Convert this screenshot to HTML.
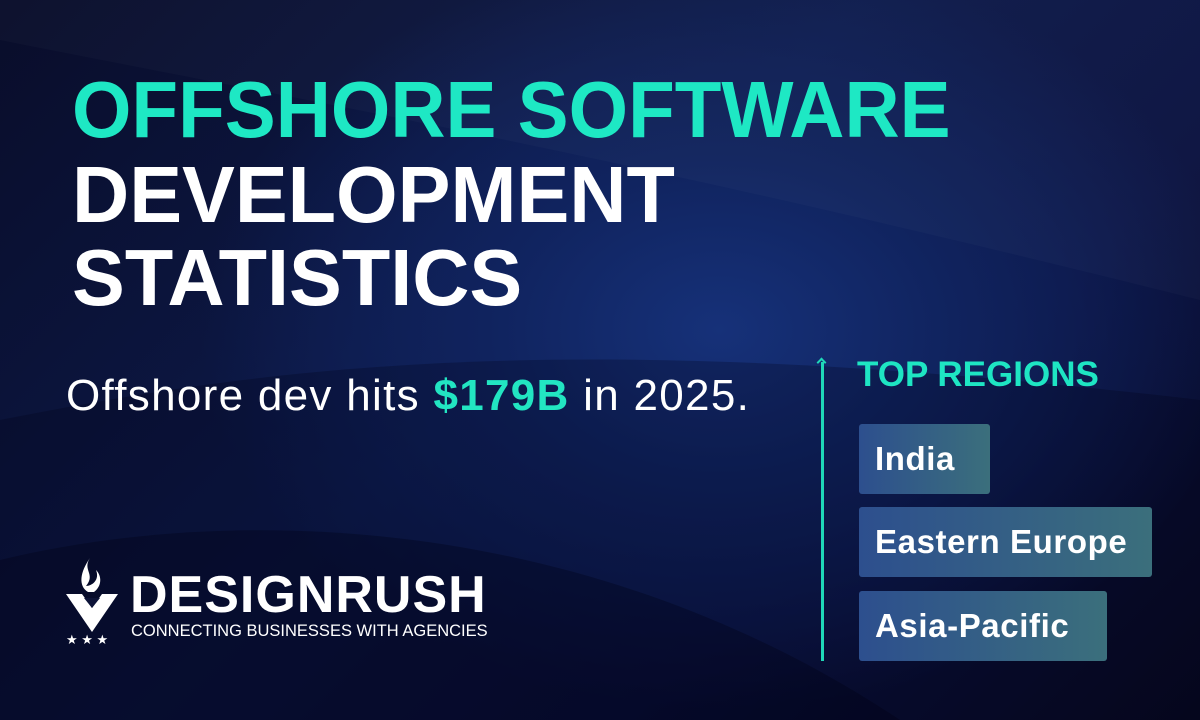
<!DOCTYPE html>
<html><head><meta charset="utf-8"><style>
html,body{margin:0;padding:0}
body{width:1200px;height:720px;overflow:hidden;position:relative;font-family:"Liberation Sans",sans-serif;
background:#0b0f2e;}
.bg{position:absolute;inset:0;background:
radial-gradient(ellipse 520px 380px at 720px 330px,#163179 0%,#10235e 45%,rgba(11,20,60,0) 100%),
linear-gradient(135deg,#090d2a 0%,#0d1a4a 45%,#0b1240 70%,#070920 100%);}
svg.w{position:absolute;inset:0}
.t{position:absolute;left:72px;font-weight:bold;font-size:80px;line-height:1;color:#fff;white-space:nowrap;transform-origin:0 0}
.sub{position:absolute;left:66px;top:371px;font-size:44px;letter-spacing:1.3px;color:#fff;white-space:nowrap}
.sub b{color:#22e5c2}
.line{position:absolute;left:821px;top:362px;width:3px;height:299px;background:#1fd8b8}
.arr{position:absolute;left:818px;top:359px;width:5px;height:5px;border-left:2px solid #1fd8b8;border-top:2px solid #1fd8b8;transform:rotate(45deg)}
.tr{position:absolute;left:857px;top:355px;font-size:35px;font-weight:bold;color:#1ee5c3;white-space:nowrap}
.box{position:absolute;left:859px;height:70px;border-radius:3px;background:linear-gradient(90deg,#2d4f8e,#3b6f7c);color:#fff;font-weight:bold;font-size:33px;letter-spacing:0.6px;line-height:70px;padding-left:16px;box-sizing:border-box;white-space:nowrap}
.logo{position:absolute;left:130px;top:565px;font-size:52px;font-weight:bold;color:#fff;letter-spacing:1px}
.tag{position:absolute;left:131px;top:622px;font-size:16.5px;color:#fff;white-space:nowrap}
</style></head><body>
<div class="bg"></div>
<svg class="w" width="1200" height="720">
<path d="M0 40 C300 100 600 150 1200 300 L1200 0 L0 0Z" fill="rgba(255,255,255,0.025)"/>
<path d="M0 420 C300 360 600 330 1200 400 L1200 720 L0 720Z" fill="rgba(0,0,20,0.25)"/>
<path d="M0 560 C250 500 600 520 900 720 L0 720Z" fill="rgba(0,0,15,0.3)"/>
</svg>
<div class="t" style="top:70px;color:#1ee8c4;transform:scaleX(0.955)">OFFSHORE SOFTWARE</div>
<div class="t" style="top:155px;transform:scaleX(0.99)">DEVELOPMENT</div>
<div class="t" style="top:238px;transform:scaleX(0.99)">STATISTICS</div>
<div class="sub">Offshore dev hits <b>$179B</b> in 2025.</div>
<div class="line"></div><div class="arr"></div>
<div class="tr">TOP REGIONS</div>
<div class="box" style="top:424px;width:131px">India</div>
<div class="box" style="top:507px;width:293px">Eastern Europe</div>
<div class="box" style="top:591px;width:248px">Asia-Pacific</div>
<svg style="position:absolute;left:62px;top:556px" width="64" height="92" viewBox="0 0 64 92">
<path d="M28 2 C20 14 34 18 24 30 C30 30 38 24 34 14 C40 20 40 30 32 36 L26 36 C16 30 18 16 28 2Z" fill="#fff"/>
<path d="M4 38 L20 38 L30 52 L40 38 L56 38 L30 76Z" fill="#fff"/>
<path d="M22 42 L38 42 L30 52Z" fill="#0c1338"/>
<text x="4" y="88" fill="#fff" font-size="13">★ ★ ★</text>
</svg>
<div class="logo">DESIGNRUSH</div>
<div class="tag">CONNECTING BUSINESSES WITH AGENCIES</div>
</body></html>
